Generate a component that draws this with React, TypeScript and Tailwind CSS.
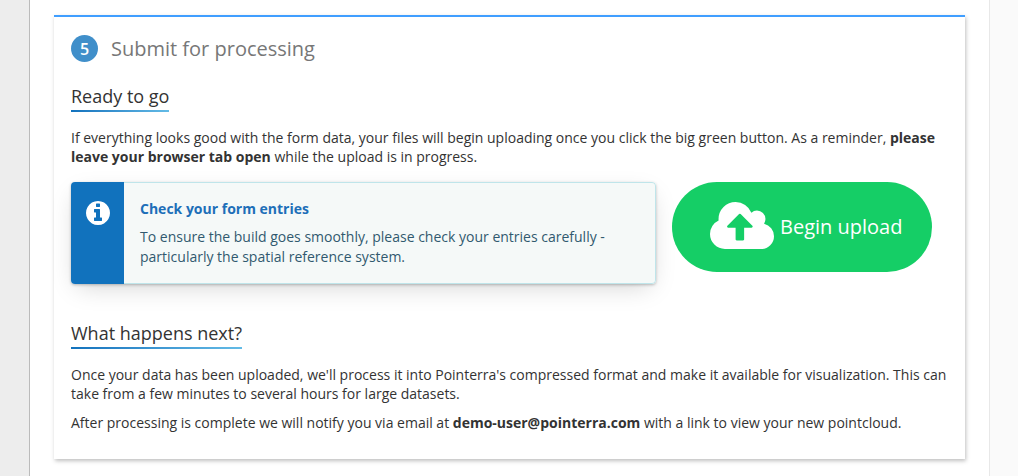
import type { ReactNode } from "react";

function InfoIcon() {
  return (
    <svg viewBox="128 128 1536 1536" className="size-6" fill="currentColor" aria-hidden="true">
      <path d="M1152 1376v-160q0-14-9-23t-23-9h-96v-512q0-14-9-23t-23-9h-320q-14 0-23 9t-9 23v160q0 14 9 23t23 9h96v320h-96q-14 0-23 9t-9 23v160q0 14 9 23t23 9h448q14 0 23-9t9-23zm-128-896v-160q0-14-9-23t-23-9h-192q-14 0-23 9t-9 23v160q0 14 9 23t23 9h192q14 0 23-9t9-23zm640 416q0 209-103 385.5t-279.5 279.5-385.5 103-385.5-103-279.5-279.5-103-385.5 103-385.5 279.5-279.5 385.5-103 385.5 103 279.5 279.5 103 385.5z" />
    </svg>
  );
}

function CloudUploadIcon() {
  return (
    <svg viewBox="0 128 1920 1408" className="mb-1 h-[47px] w-16 shrink-0" fill="currentColor" aria-hidden="true">
      <path d="M1280 864q0-14-9-23l-352-352q-9-9-23-9t-23 9l-351 351q-10 12-10 24 0 14 9 23t23 9h224v352q0 13 9.5 22.5t22.5 9.5h192q13 0 22.5-9.5t9.5-22.5v-352h224q13 0 22.5-9.5t9.5-22.5zm640 288q0 159-112.5 271.5t-271.5 112.5h-1088q-185 0-316.5-131.5t-131.5-316.5q0-130 70-240t188-165q-2-30-2-43 0-212 150-362t362-150q156 0 285.5 87t188.5 231q71-62 166-62 106 0 181 75t75 181q0 76-41 138 130 31 213.5 135.5t83.5 238.5z" />
    </svg>
  );
}

function SectionTitle({ children }: { children: ReactNode }) {
  return (
    <h3 className="w-fit text-lg leading-7 text-[#333]">
      {children}
      <span className="block h-0.5 bg-linear-to-r from-[#1172bd] to-[#63bbe6]" />
    </h3>
  );
}

export default function App() {
  return (
    <div className="flex min-h-screen bg-[#ededed] font-['Open_Sans','Noto_Sans',sans-serif] text-sm leading-[19px] text-[#333]">
      <div className="w-[29px] shrink-0" />
      <main className="flex-1 border-x border-l-[#bbb] border-r-[#e8e8e8] bg-white px-6 pt-[15px] pb-4">
        <section className="border-t-2 border-[#409eff] px-[17px] pt-[18px] pb-[27px] shadow-[1px_2px_4px_rgba(0,0,0,0.25)]">
          <h2 className="flex items-center gap-[13px] text-xl leading-[26px] text-[#777]">
            <span className="flex size-[27px] items-center justify-center rounded-full bg-[#408fca] text-base font-semibold text-white">
              5
            </span>
            Submit for processing
          </h2>

          <div className="mt-5">
            <SectionTitle>Ready to go</SectionTitle>
          </div>
          <p className="mt-4">
            If everything looks good with the form data, your files will begin uploading once you click the big green
            button. As a reminder, <strong>please leave your browser tab open</strong> while the upload is in progress.
          </p>

          <div className="mt-4 flex items-start gap-4 pr-4">
            <div className="flex flex-1 overflow-hidden rounded-[4px] shadow-[0_1px_3px_rgba(0,0,0,0.25),0_8px_24px_-6px_rgba(0,0,0,0.18)]">
              <div className="w-[53px] shrink-0 bg-[#1172bd] pt-[19px] pl-[15px] text-white">
                <InfoIcon />
              </div>
              <div className="flex-1 rounded-r-[4px] border border-l-0 border-[#bfe5ea] bg-[#f5f9f8] px-4 py-4 leading-5 text-[#31596f]">
                <h4 className="font-bold text-[#1d6fb8]">Check your form entries</h4>
                <p className="mt-2">
                  To ensure the build goes smoothly, please check your entries carefully - particularly the spatial
                  reference system.
                </p>
              </div>
            </div>
            <button
              type="button"
              className="flex h-[90px] w-[260px] shrink-0 items-center gap-1.5 rounded-full bg-[#15ce66] pl-[38px] text-xl whitespace-nowrap text-white"
            >
              <CloudUploadIcon />
              Begin upload
            </button>
          </div>

          <div className="mt-[35px]">
            <SectionTitle>What happens next?</SectionTitle>
          </div>
          <p className="mt-4">
            Once your data has been uploaded, we'll process it into Pointerra's compressed format and make it available
            for visualization. This can take from a few minutes to several hours for large datasets.
          </p>
          <p className="mt-2.5">
            After processing is complete we will notify you via email at <strong>demo-user@pointerra.com</strong> with a
            link to view your new pointcloud.
          </p>
        </section>
      </main>
      <div className="w-7 shrink-0 bg-[#fafafa]" />
    </div>
  );
}
